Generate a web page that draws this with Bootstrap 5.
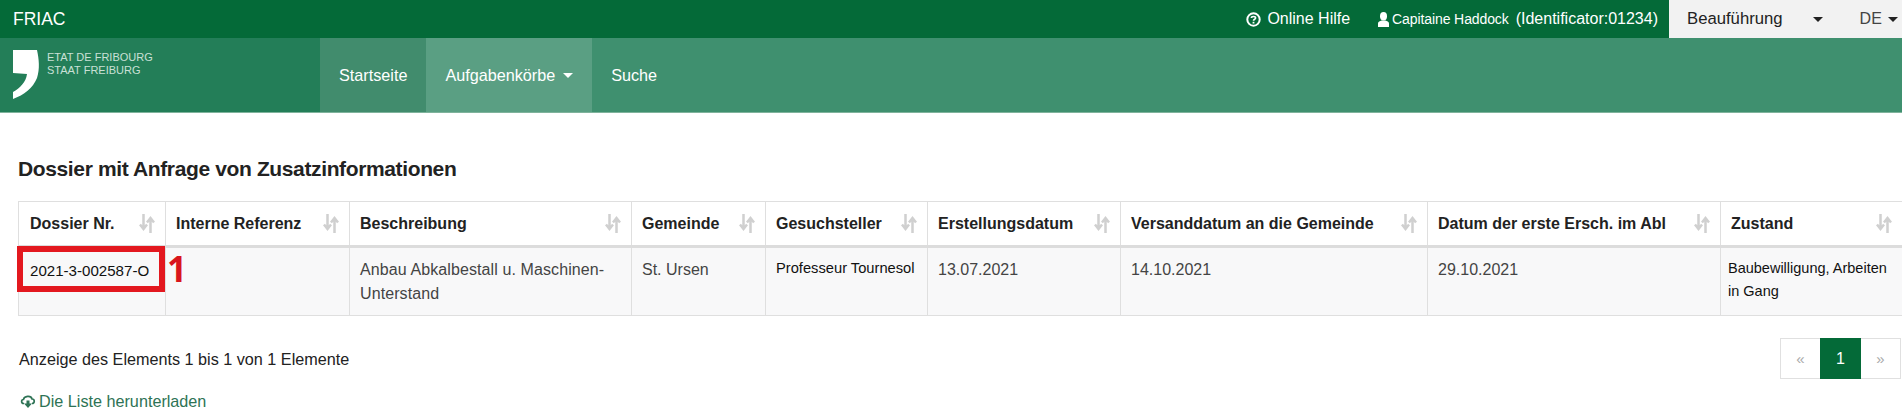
<!DOCTYPE html>
<html lang="de">
<head>
    <meta charset="UTF-8">
    <title>FRIAC</title>
    <link rel="stylesheet" href="https://cdn.jsdelivr.net/npm/bootstrap@5.3.0/dist/css/bootstrap.min.css">
    <style>
        body {
            font-family: "Liberation Sans", Arial, sans-serif;
            font-size: 16px;
            color: #333;
            background: #fff;
        }
        .top-bar {
            height: 38px;
            background: #046a38;
            color: #fff;
            font-size: 16px;
        }
        .app-name { font-size: 17.500px; padding-left: 13px; }
        .top-link { display: flex; align-items: center; }
        .help-link { gap: 6px; margin-right: 28px; }
        .user-link { gap: 3px; margin-right: 7px; }
        .user-name { font-size: 14px; letter-spacing: -.1px; }
        .id-text { margin-right: 11px; }
        .role-box {
            width: 233px;
            height: 38px;
            background: #f2f2f2;
            color: #222;
            padding: 0 4px 0 18px;
            font-size: 16.700px;
        }
        .caret-down {
            display: inline-block;
            width: 0;
            height: 0;
            border-left: 5px solid transparent;
            border-right: 5px solid transparent;
            border-top: 5px solid currentColor;
        }
        .role-caret { margin-left: 30px; margin-right: 37px; }
        .lang-text { color: #444; font-size: 16px; margin-right: 6px; }
        .main-bar {
            height: 75px;
            background: #3f906f;
            border-bottom: 1px solid #7fb39c;
            color: #fff;
        }
        .logo-box { width: 320px; padding: 12px 0 0 13px; background: #237e58; }
        .logo-text { font-size: 11px; line-height: 13px; color: #c9e0d6; padding: 1px 0 0 7px; }
        .menu-item {
            display: flex;
            align-items: center;
            gap: 8px;
            height: 74px;
            padding: 0 19px;
            color: #fff;
            font-size: 16.200px;
            text-decoration: none;
        }
        .menu-first { background: #418c6d; }
        .menu-open { background: #5a9f83; }
        .page-title {
            font-size: 21px;
            letter-spacing: -.37px;
            font-weight: 700;
            color: #222;
            margin: 43px 0 20px 18px;
        }
        .list-wrap { position: relative; margin-left: 18px; }
        .dossier-table { table-layout: fixed; width: 1884px; margin: 0; border-color: #dfdfdf; }
        .dossier-table th {
            height: 45px;
            padding: 0 10px;
            font-size: 16px;
            vertical-align: middle;
            color: #222;
            border-bottom: 3px solid #dcdcdc;
        }
        .dossier-table td {
            height: 69px;
            padding: 10px 10px 0;
            line-height: 24px;
            color: #444;
            background: #f8f8f9;
            vertical-align: top;
        }
        .dossier-table .desc-cell { letter-spacing: .1px; }
        .dossier-table .name-cell { color: #111; font-size: 14.700px; padding: 8px 10px 0; }
        .dossier-table .state-cell { color: #111; font-size: 14.500px; line-height: 23px; padding: 9px 7px 0; }
        .dossier-table .w-a { padding-left: 11px; }
        .head-cell { display: flex; align-items: center; justify-content: space-between; white-space: nowrap; }
        .sort-icon { color: #d0d0d0; flex-shrink: 0; }
        .w-a { width: 147px; } .w-b { width: 184px; } .w-c { width: 282px; }
        .w-d { width: 134px; } .w-e { width: 162px; } .w-f { width: 193px; }
        .w-g { width: 307px; } .w-h { width: 293px; } .w-i { width: 182px; }
        .mark-box {
            position: absolute;
            left: -1px;
            top: 45px;
            width: 148px;
            height: 46px;
            border: 6px solid #e3181f;
            color: #111;
            font-size: 15.100px;
            line-height: 34px;
            padding: 2px 0 0 7px;
            white-space: nowrap;
        }
        .mark-num {
            position: absolute;
            left: 149px;
            top: 48px;
            font-family: "Open Sans", "Liberation Sans", sans-serif;
            font-size: 35px;
            font-weight: 700;
            line-height: 40px;
            color: #d9151d;
        }
        .foot-row { padding: 22px 1px 0 19px; }
        .pagination { margin: 0; }
        .pagination .page-link {
            width: 41px;
            height: 41px;
            padding: 0;
            line-height: 39px;
            text-align: center;
            border-radius: 0 !important;
            border-color: #e0e0e0;
            background: #fff;
            color: #aaa;
            font-size: 15px;
        }
        .pagination .active .page-link {
            background: #046a38;
            border-color: #046a38;
            color: #fff;
            font-size: 16px;
        }
        .list-info { color: #222; font-size: 16.200px; padding-top: 9px; }
        .download-link {
            display: flex;
            align-items: center;
            gap: 3px;
            margin: 10px 0 0 20px;
            color: #2e7355;
            font-size: 16.200px;
            text-decoration: none;
        }
    </style>
</head>
<body>
    <svg class="d-none">
        <symbol id="sort" viewBox="0 0 16 19">
            <path d="M4.500 0V14M1 10.500 4.500 15 8 10.500M11.500 19V5M8 8.500 11.500 4 15 8.500" fill="none" stroke="currentColor" stroke-width="2.500"/>
        </symbol>
    </svg>

    <div class="top-bar d-flex align-items-center justify-content-between">
        <div class="app-name">FRIAC</div>
        <div class="d-flex align-items-center">
            <div class="top-link help-link">
                <svg width="15" height="15" viewBox="0 0 15 15"><circle cx="7.500" cy="7.500" r="6.200" fill="none" stroke="#fff" stroke-width="2"/><path d="M5.400 6C5.400 3.900 9.600 3.900 9.600 6 9.600 7.400 7.500 7.200 7.500 8.800" fill="none" stroke="#fff" stroke-width="1.600"/><rect x="6.600" y="9.800" width="1.800" height="1.700" fill="#fff"/></svg>
                <span>Online Hilfe</span>
            </div>
            <div class="top-link user-link">
                <svg width="11" height="15" viewBox="0 0 11 15"><ellipse cx="5.500" cy="4.200" rx="3.500" ry="4.200" fill="#fff"/><path d="M0 15V11.500C0 9.500 2 9.200 3.500 8.500H7.500C9 9.200 11 9.500 11 11.500V15Z" fill="#fff"/></svg>
                <span class="user-name">Capitaine Haddock</span>
            </div>
            <div class="id-text">(Identificator:01234)</div>
            <div class="role-box d-flex align-items-center">
                <span>Beauführung</span>
                <span class="caret-down role-caret"></span>
                <span class="lang-text">DE</span>
                <span class="caret-down"></span>
            </div>
        </div>
    </div>

    <div class="main-bar d-flex">
        <div class="logo-box d-flex">
            <svg width="27" height="50" viewBox="0 0 27 50"><path d="M0 0H24C26 9 27 19 24 28 20 38 11 45 0 49V42C7 38 13 32 14 24L0 23Z" fill="#fff"/></svg>
            <div class="logo-text">ETAT DE FRIBOURG<br>STAAT FREIBURG</div>
        </div>
        <a class="menu-item menu-first" href="#">Startseite</a>
        <a class="menu-item menu-open" href="#">Aufgabenkörbe <span class="caret-down"></span></a>
        <a class="menu-item" href="#">Suche</a>
    </div>

    <h1 class="page-title">Dossier mit Anfrage von Zusatzinformationen</h1>

    <div class="list-wrap">
        <table class="table table-bordered dossier-table">
            <thead>
                <tr>
                    <th class="w-a"><div class="head-cell">Dossier Nr. <svg class="sort-icon" width="16" height="19"><use href="#sort"/></svg></div></th>
                    <th class="w-b"><div class="head-cell">Interne Referenz <svg class="sort-icon" width="16" height="19"><use href="#sort"/></svg></div></th>
                    <th class="w-c"><div class="head-cell">Beschreibung <svg class="sort-icon" width="16" height="19"><use href="#sort"/></svg></div></th>
                    <th class="w-d"><div class="head-cell">Gemeinde <svg class="sort-icon" width="16" height="19"><use href="#sort"/></svg></div></th>
                    <th class="w-e"><div class="head-cell">Gesuchsteller <svg class="sort-icon" width="16" height="19"><use href="#sort"/></svg></div></th>
                    <th class="w-f"><div class="head-cell">Erstellungsdatum <svg class="sort-icon" width="16" height="19"><use href="#sort"/></svg></div></th>
                    <th class="w-g"><div class="head-cell">Versanddatum an die Gemeinde <svg class="sort-icon" width="16" height="19"><use href="#sort"/></svg></div></th>
                    <th class="w-h"><div class="head-cell">Datum der erste Ersch. im Abl <svg class="sort-icon" width="16" height="19"><use href="#sort"/></svg></div></th>
                    <th class="w-i"><div class="head-cell">Zustand <svg class="sort-icon" width="16" height="19"><use href="#sort"/></svg></div></th>
                </tr>
            </thead>
            <tbody>
                <tr>
                    <td></td>
                    <td></td>
                    <td class="desc-cell">Anbau Abkalbestall u. Maschinen-Unterstand</td>
                    <td>St. Ursen</td>
                    <td class="name-cell">Professeur Tournesol</td>
                    <td>13.07.2021</td>
                    <td>14.10.2021</td>
                    <td>29.10.2021</td>
                    <td class="state-cell">Baubewilligung, Arbeiten in Gang</td>
                </tr>
            </tbody>
        </table>
        <div class="mark-box">2021-3-002587-O</div>
        <div class="mark-num">1</div>
    </div>

    <div class="foot-row d-flex justify-content-between align-items-start">
        <div class="list-info">Anzeige des Elements 1 bis 1 von 1 Elemente</div>
        <ul class="pagination">
            <li class="page-item disabled"><a class="page-link" href="#">«</a></li>
            <li class="page-item active"><a class="page-link" href="#">1</a></li>
            <li class="page-item disabled"><a class="page-link" href="#">»</a></li>
        </ul>
    </div>
    <a class="download-link" href="#">
        <svg width="16" height="14" viewBox="0 0 16 14"><path d="M4 9.500H3.500C1 9.500 1 5.500 3.500 5.500 4 2 11 1 12 5 15 5 15 9.500 12 9.500" fill="none" stroke="#2e7355" stroke-width="1.700"/><path d="M6.500 6.500H9.500V9.500H12L8 14 4 9.500H6.500Z" fill="#2e7355"/></svg>
        <span>Die Liste herunterladen</span>
    </a>

    <script src="https://cdn.jsdelivr.net/npm/bootstrap@5.3.0/dist/js/bootstrap.bundle.min.js"></script>
</body>
</html>
